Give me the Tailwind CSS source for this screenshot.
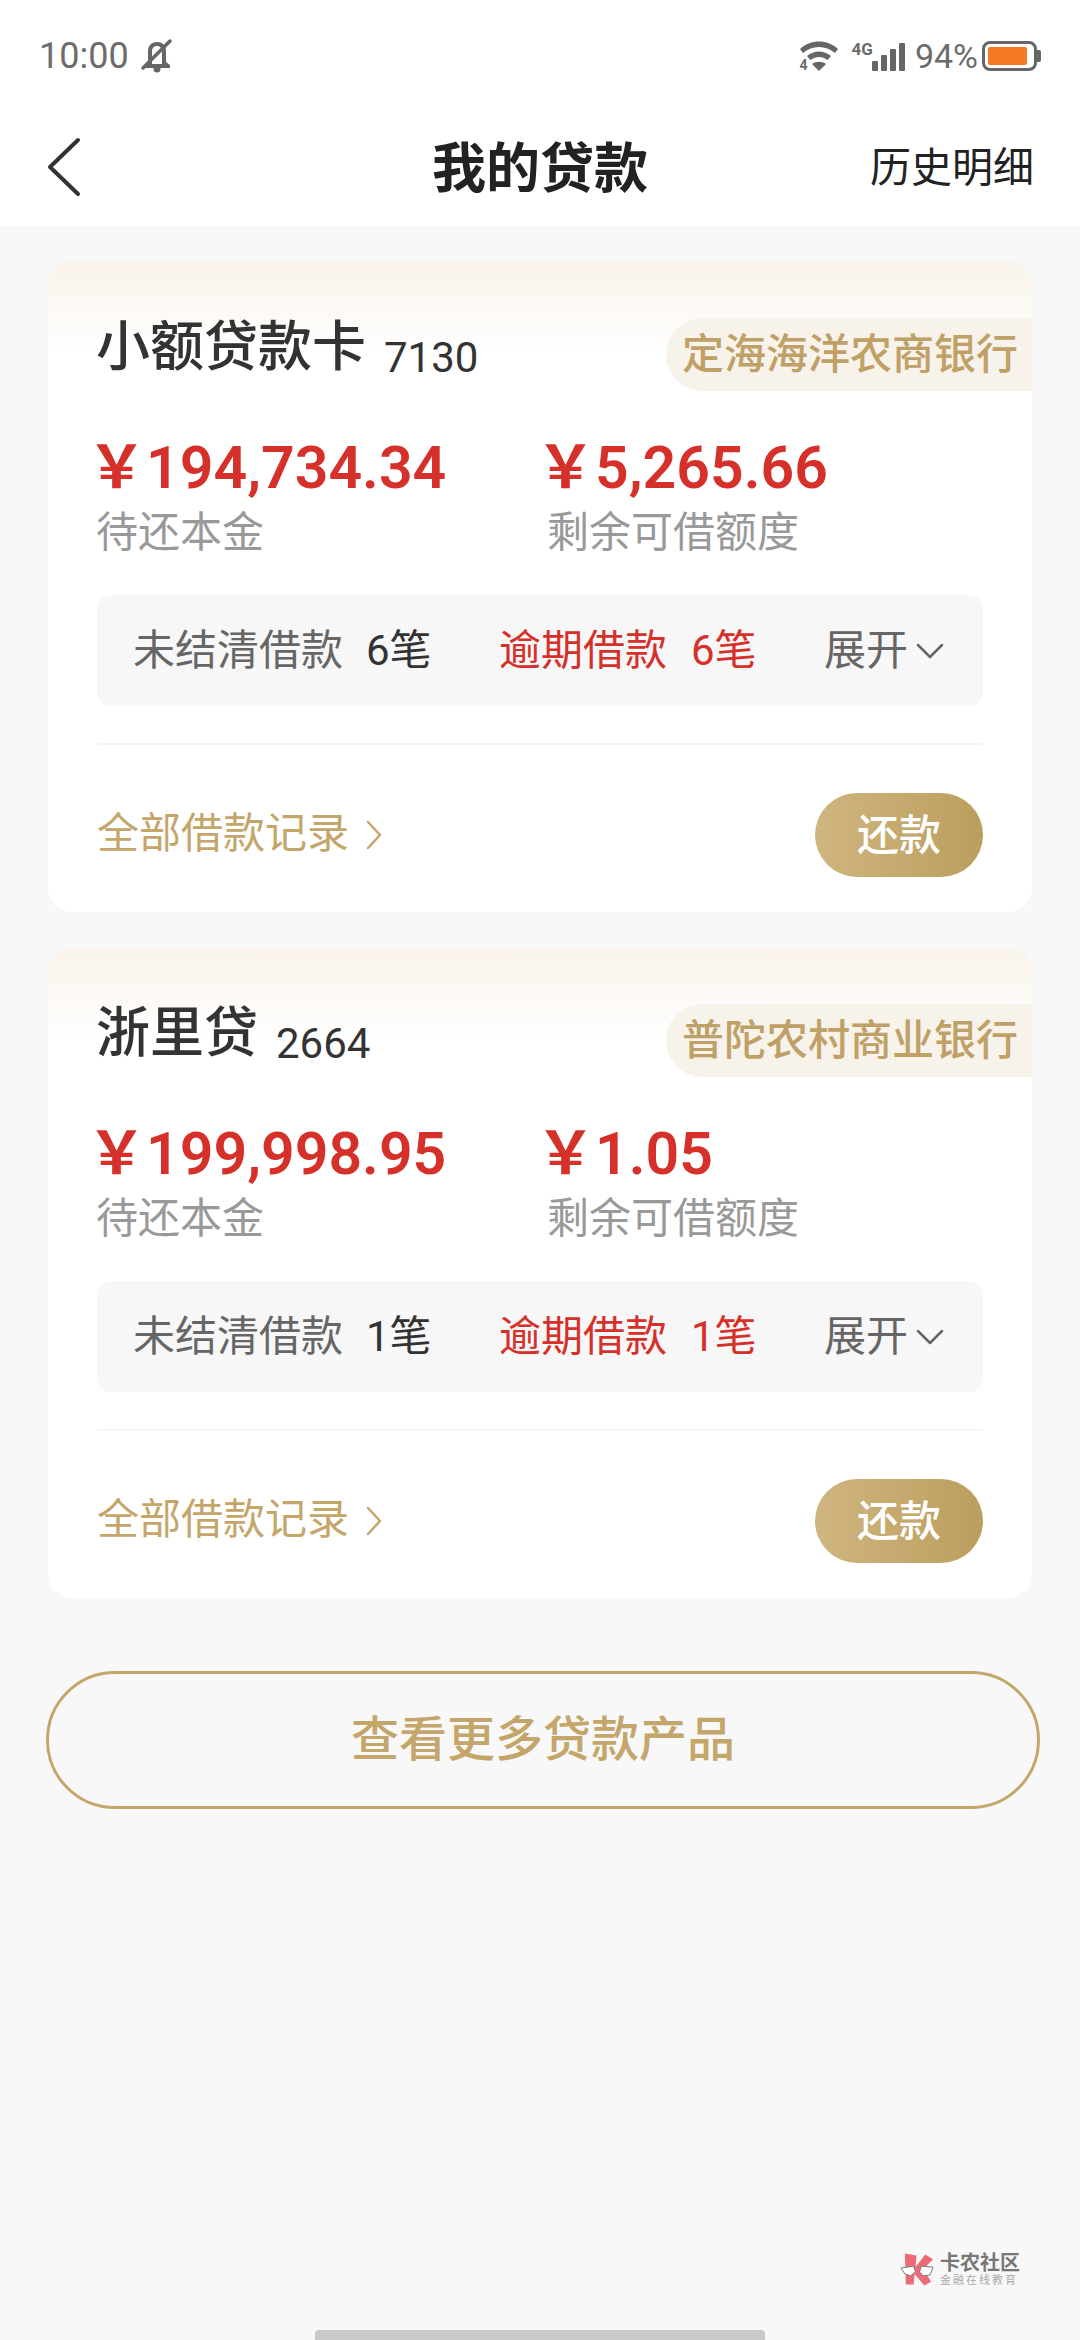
<!DOCTYPE html>
<html lang="zh-CN">

<head>
    <meta charset="UTF-8">
    <meta name="viewport" content="width=device-width, initial-scale=1.0">
    <title>我的贷款</title>
    <script src="https://cdn.jsdelivr.net/npm/@tailwindcss/browser@4"></script>
</head>

<body class="relative w-[1080px] h-[2340px] overflow-hidden bg-[#f8f8f8] font-['Roboto','Noto_Sans_CJK_SC',sans-serif]">

    <!-- status bar -->
    <div class="h-[112px] bg-white flex items-center justify-between pl-[39px] pr-[39px] text-[#6b6b6b]">
        <div class="flex items-center gap-[12px]">
            <span class="text-[36px] leading-none">10:00</span>
            <svg class="w-[32px] h-[34px]" viewBox="0 0 32 34" fill="#666666">
                <path d="M16 3c-6 0-9 4-9 9v11l-4 4v2h26v-3l-4-3V12c0-5-3-9-9-9zm0 4c3.500 0 5 2.500 5 5.500V25H11V12.500C11 9.500 12.500 7 16 7z" />
                <circle cx="16" cy="30" r="3.500" />
                <path d="M2 29 L29 2" stroke="#666666" stroke-width="3.500" stroke-linecap="round" />
            </svg>
        </div>
        <div class="flex items-center">
            <div class="relative w-[40px] h-[32px] mr-[13px]">
                <svg class="w-[40px] h-[32px]" viewBox="0 0 40 32" fill="#666666">
                    <path d="M1 9C11 -1 29 -1 39 9l-3 4C27 5 13 5 4 13z" />
                    <path d="M8 16c7-6 17-6 24 0l-3.500 4c-5-4-12-4-17 0z" />
                    <path d="M20 31l-7-7c4-3 10-3 14 0z" />
                </svg>
                <span class="absolute left-[1px] bottom-[0px] text-[14px] leading-none font-bold">4</span>
            </div>
            <div class="flex items-end mr-[10px] h-[30px]">
                <span class="text-[17px] font-bold leading-none self-start">4G</span>
                <div class="flex items-end gap-[3px] ml-[-1px]">
                    <span class="w-[6px] h-[10px] bg-[#666666] rounded-[1px]"></span>
                    <span class="w-[6px] h-[16px] bg-[#666666] rounded-[1px]"></span>
                    <span class="w-[6px] h-[22px] bg-[#666666] rounded-[1px]"></span>
                    <span class="w-[6px] h-[28px] bg-[#666666] rounded-[1px]"></span>
                </div>
            </div>
            <span class="text-[34px] leading-none mr-[4px]">94%</span>
            <div class="flex items-center">
                <div class="w-[55px] h-[30px] border-[3px] border-[#666666] rounded-[8px] p-[3px]">
                    <div class="w-[39px] h-full bg-[#f47a25] rounded-[2px]"></div>
                </div>
                <span class="w-[4px] h-[12px] bg-[#666666] rounded-r-[2px]"></span>
            </div>
        </div>
    </div>

    <!-- title bar -->
    <div class="relative h-[114px] bg-white flex items-center justify-between pl-[46px] pr-[46px]">
        <svg class="w-[36px] h-[60px] mb-[4px]" viewBox="0 0 36 60" fill="none" stroke="#333333" stroke-width="4" stroke-linecap="round" stroke-linejoin="round">
            <path d="M32 3 L4 30 L32 57" />
        </svg>
        <h1 class="absolute left-0 right-0 text-center text-[54px] font-bold text-[#222222]">我的贷款</h1>
        <span class="text-[41px] text-[#222222]">历史明细</span>
    </div>

    <!-- loan cards -->
    <div class="flex flex-col gap-[36px] px-[48px] pt-[36px]">

        <div class="h-[650px] bg-white rounded-[24px] overflow-hidden bg-linear-to-b from-[#f9f3ea] to-white to-[90px] bg-no-repeat">
            <div class="h-[129px] flex items-end justify-between pl-[48px]">
                <div class="flex items-baseline gap-[18px] mb-[16px]">
                    <span class="text-[54px] leading-none font-medium text-[#333333]">小额贷款卡</span>
                    <span class="text-[42px] leading-none text-[#333333] translate-y-[6px]">7130</span>
                </div>
                <span class="h-[73px] pl-[16px] pr-[14px] flex items-center rounded-l-full bg-[#f7f2ea] text-[42px] font-medium text-[#bfa066]">定海海洋农商银行</span>
            </div>
            <div class="flex pl-[46px] pt-[43px]">
                <div class="w-[451px]">
                    <div class="text-[59px] leading-[68px] font-semibold text-[#d5302a]"><span class="ml-[-7px]">￥</span>194,734.34</div>
                    <div class="mt-[5px] text-[42px] leading-[52px] pl-[2px] text-[#999999]">待还本金</div>
                </div>
                <div>
                    <div class="text-[59px] leading-[68px] font-semibold text-[#d5302a]"><span class="ml-[-9px]">￥</span>5,265.66</div>
                    <div class="mt-[5px] text-[42px] leading-[52px] pl-[2px] text-[#999999]">剩余可借额度</div>
                </div>
            </div>
            <div class="mx-[49px] mt-[36px] h-[111px] rounded-[14px] bg-[#f7f7f7] flex items-center justify-between pl-[36px] pr-[39px] text-[42px]">
                <span class="text-[#666666]">未结清借款<span class="ml-[23px] text-[#333333]">6笔</span></span>
                <span class="text-[#d5302a]">逾期借款<span class="ml-[24px]">6笔</span></span>
                <span class="flex items-center gap-[8px] text-[#666666]">展开
                    <svg class="w-[28px] h-[18px]" viewBox="0 0 28 18" fill="none" stroke="#666666" stroke-width="2.500" stroke-linecap="round" stroke-linejoin="round">
                        <path d="M2 3 L14 15 L26 3" />
                    </svg>
                </span>
            </div>
            <div class="mx-[49px] mt-[37px] h-[2px] bg-[#f5f5f5]"></div>
            <div class="mx-[49px] mt-[48px] flex items-center justify-between">
                <span class="flex items-center gap-[16px] mb-[3px] text-[42px] text-[#c4a66b]">全部借款记录
                    <svg class="w-[18px] h-[30px] mt-[3px]" viewBox="0 0 18 30" fill="none" stroke="#c4a66b" stroke-width="2.500" stroke-linecap="round" stroke-linejoin="round">
                        <path d="M3 2 L15 15 L3 28" />
                    </svg>
                </span>
                <button class="w-[168px] h-[84px] rounded-full bg-linear-to-r from-[#cfb57f] to-[#bb9e5e] text-[42px] font-medium text-white">还款</button>
            </div>
        </div>

        <div class="h-[650px] bg-white rounded-[24px] overflow-hidden bg-linear-to-b from-[#f9f3ea] to-white to-[90px] bg-no-repeat">
            <div class="h-[129px] flex items-end justify-between pl-[48px]">
                <div class="flex items-baseline gap-[18px] mb-[16px]">
                    <span class="text-[54px] leading-none font-medium text-[#333333]">浙里贷</span>
                    <span class="text-[42px] leading-none text-[#333333] translate-y-[6px]">2664</span>
                </div>
                <span class="h-[73px] pl-[16px] pr-[14px] flex items-center rounded-l-full bg-[#f7f2ea] text-[42px] font-medium text-[#bfa066]">普陀农村商业银行</span>
            </div>
            <div class="flex pl-[46px] pt-[43px]">
                <div class="w-[451px]">
                    <div class="text-[59px] leading-[68px] font-semibold text-[#d5302a]"><span class="ml-[-7px]">￥</span>199,998.95</div>
                    <div class="mt-[5px] text-[42px] leading-[52px] pl-[2px] text-[#999999]">待还本金</div>
                </div>
                <div>
                    <div class="text-[59px] leading-[68px] font-semibold text-[#d5302a]"><span class="ml-[-9px]">￥</span>1.05</div>
                    <div class="mt-[5px] text-[42px] leading-[52px] pl-[2px] text-[#999999]">剩余可借额度</div>
                </div>
            </div>
            <div class="mx-[49px] mt-[36px] h-[111px] rounded-[14px] bg-[#f7f7f7] flex items-center justify-between pl-[36px] pr-[39px] text-[42px]">
                <span class="text-[#666666]">未结清借款<span class="ml-[23px] text-[#333333]">1笔</span></span>
                <span class="text-[#d5302a]">逾期借款<span class="ml-[24px]">1笔</span></span>
                <span class="flex items-center gap-[8px] text-[#666666]">展开
                    <svg class="w-[28px] h-[18px]" viewBox="0 0 28 18" fill="none" stroke="#666666" stroke-width="2.500" stroke-linecap="round" stroke-linejoin="round">
                        <path d="M2 3 L14 15 L26 3" />
                    </svg>
                </span>
            </div>
            <div class="mx-[49px] mt-[37px] h-[2px] bg-[#f5f5f5]"></div>
            <div class="mx-[49px] mt-[48px] flex items-center justify-between">
                <span class="flex items-center gap-[16px] mb-[3px] text-[42px] text-[#c4a66b]">全部借款记录
                    <svg class="w-[18px] h-[30px] mt-[3px]" viewBox="0 0 18 30" fill="none" stroke="#c4a66b" stroke-width="2.500" stroke-linecap="round" stroke-linejoin="round">
                        <path d="M3 2 L15 15 L3 28" />
                    </svg>
                </span>
                <button class="w-[168px] h-[84px] rounded-full bg-linear-to-r from-[#cfb57f] to-[#bb9e5e] text-[42px] font-medium text-white">还款</button>
            </div>
        </div>

        <button class="mt-[37px] ml-[-2px] w-[994px] h-[138px] rounded-full border-[3px] border-[#c4a66b] text-[48px] font-medium text-[#c4a66b]">查看更多贷款产品</button>
    </div>

    <!-- watermark -->
    <div class="absolute left-[900px] top-[2252px] flex items-center gap-[5px]">
        <svg class="w-[35px] h-[36px]" viewBox="0 0 36 36">
            <path d="M5 1 L17 3 L16 15 L26 2 L34 7 L24 17 L32 30 L25 34 L15 22 L14 33 L6 33 Z" fill="#ee6a76" />
            <path d="M1 16 L14 14 L16 20 L11 24 L5 22 Z M20 20 L22 14 L34 15 L31 23 L24 24 Z" fill="#ffffff" stroke="#777777" stroke-width="1" />
        </svg>
        <div class="flex flex-col">
            <span class="text-[20px] leading-[22px] font-bold text-[#777777]">卡农社区</span>
            <span class="text-[11px] leading-[14px] tracking-[2px] text-[#aaaaaa]">金融在线教育</span>
        </div>
    </div>

    <!-- home indicator -->
    <div class="absolute left-[315px] top-[2330px] w-[450px] h-[10px] bg-[#c9c9c9] rounded-t-[4px]"></div>

</body>

</html>
